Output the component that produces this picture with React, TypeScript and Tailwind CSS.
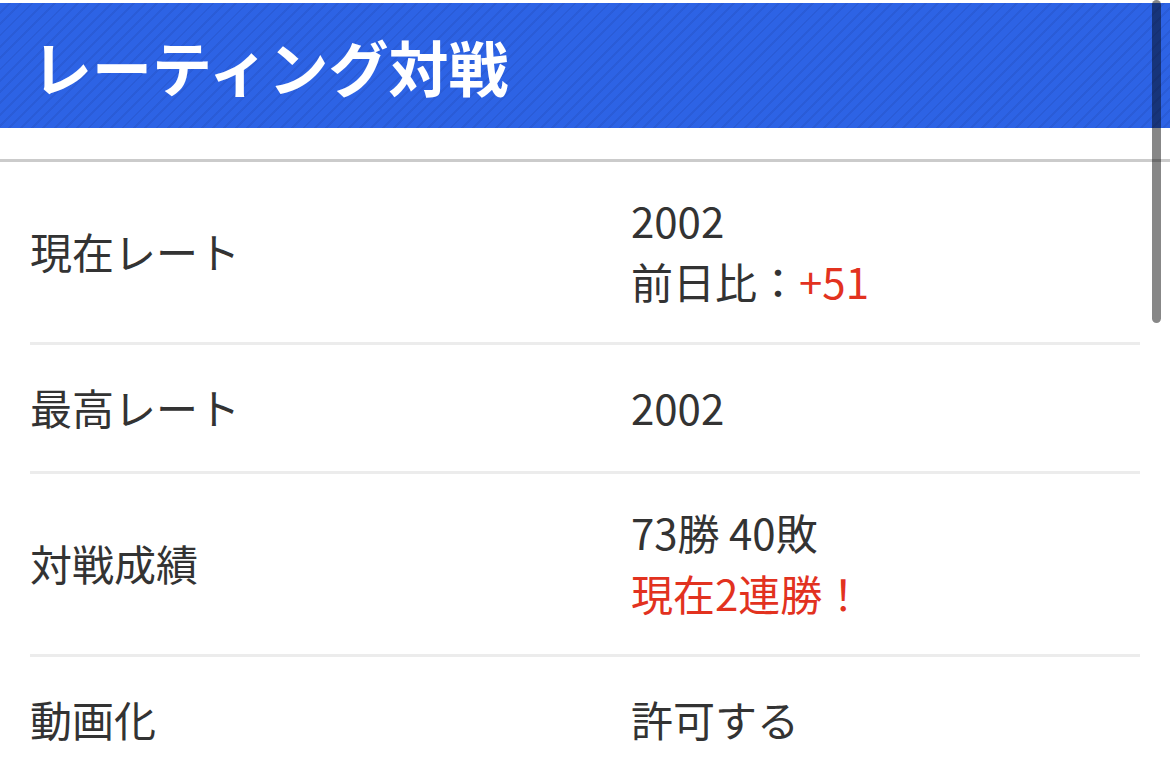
const rows = [
  { label: "現在レート", lines: [{ text: "2002" }, { text: "前日比：", extra: "+51" }] },
  { label: "最高レート", lines: [{ text: "2002" }] },
  { label: "対戦成績", lines: [{ text: "73勝 40敗" }, { text: "現在2連勝！", red: true }] },
  { label: "動画化", lines: [{ text: "許可する" }] },
];

export default function App() {
  return (
    <div className="relative w-[1170px] h-[771px] overflow-hidden bg-white font-['Noto_Sans_CJK_JP','Noto_Sans',sans-serif] text-[#333]">
      <header className="mt-[3px] h-[125px] flex items-center pl-[32px] bg-[#2d63e5] bg-[repeating-linear-gradient(135deg,transparent_0_6px,rgba(10,20,80,0.09)_6px_8px)]">
        <h1 className="text-[60px] font-bold text-white leading-none">レーティング対戦</h1>
      </header>

      <div className="mt-[31px] border-t-[3px] border-[#cbcbcb]" />

      <div className="mx-[30px]">
        {rows.map((row, i) => (
          <div
            key={row.label}
            className={`flex items-center ${row.lines.length > 1 ? "py-[29px]" : "py-[32.5px]"} ${i < rows.length - 1 ? "border-b-[3px] border-[#ececec]" : ""}`}
          >
            <div className="w-[601px] text-[42px] leading-[61px] -translate-y-[2px]">{row.label}</div>
            <div className="text-[42px] leading-[61px] -translate-y-[2px]">
              {row.lines.map((line, j) => (
                <div key={j} className={line.red ? "text-[#e2321f]" : ""}>
                  {line.text}
                  {line.extra && <span className="text-[#e2321f]">{line.extra}</span>}
                </div>
              ))}
            </div>
          </div>
        ))}
      </div>

      {/* overlay scrollbar */}
      <div className="absolute top-0 left-[1152px] w-[9px] h-[323px] rounded-full bg-black/[0.47]" />
    </div>
  );
}
